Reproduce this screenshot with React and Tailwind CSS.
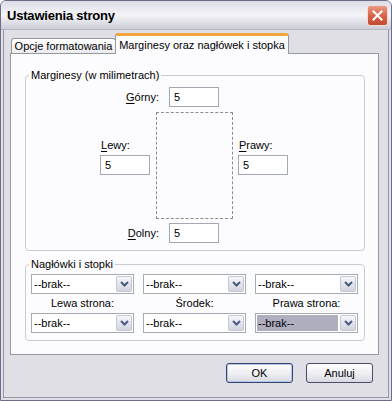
import React from 'react';

const Key = ({ k, rest }) => (
    <span>
        <u className="underline-offset-[2px]">{k}</u>
        {rest}
    </span>
);

const Field = ({ value }) => (
    <div className="w-[50px] h-[20px] border border-[#a3a9b4] bg-white flex items-center pl-[4px]">
        {value}
    </div>
);

const Combo = ({ selected }) => (
    <div className="h-[20px] border border-[#a5acb2] bg-white flex p-[1px]">
        <div className={`flex-1 flex items-center pl-[1px] ${selected ? 'bg-[#aeaebf]' : ''}`}>--brak--</div>
        <div className="w-[16px] ml-[2px] rounded-[2px] border border-[#c4c8d6] bg-gradient-to-b from-[#f6f7fb] to-[#d0d4e0] flex items-center justify-center">
            <svg width="9" height="6" viewBox="0 0 9 6">
                <path d="M1 1 L4.5 4.5 L8 1" stroke="#4a5a7c" strokeWidth="2" fill="none" />
            </svg>
        </div>
    </div>
);

const XpButton = ({ children, isDefault }) => (
    <button
        className={`w-[67px] h-[20px] rounded-[3px] border bg-gradient-to-b from-white via-[#f0f0f4] to-[#d8d8e2] flex items-center justify-center ${
            isDefault ? 'border-[#34446c] shadow-[inset_0_0_0_1px_#b4c8ee]' : 'border-[#4c4c6a]'
        }`}
    >
        {children}
    </button>
);

export default function App() {
    return (
        <div className="w-[392px] h-[401px] flex flex-col border border-[#6c6c86] rounded-t-[6px] bg-[#e0dfe5] text-[11px] leading-[13px] text-black font-['Liberation_Sans',Arial,sans-serif] overflow-hidden">
            {/* Title bar */}
            <div className="h-[29px] flex items-center justify-between pl-[6px] pr-[3px] bg-gradient-to-b from-[#dcdce6] via-[#f4f4f8] to-[#cdcdd8] border-b border-[#b6b6c6]">
                <span className="text-[13px] font-bold tracking-[-0.2px]">Ustawienia strony</span>
                <div className="w-[21px] h-[21px] rounded-[3px] border border-[#f4dcd6] bg-gradient-to-b from-[#e99a86] via-[#d8644a] to-[#c24a32] flex items-center justify-center">
                    <svg width="11" height="11" viewBox="0 0 11 11">
                        <path d="M1.5 1.5 L9.5 9.5 M9.5 1.5 L1.5 9.5" stroke="white" strokeWidth="2" strokeLinecap="square" />
                    </svg>
                </div>
            </div>

            {/* Body */}
            <div className="flex-1 mx-[2px] mb-[2px] border-x border-b border-[#9494aa] pl-[6px] pr-[9px] pt-[3px]">
                {/* Tabs */}
                <div className="flex items-end h-[20px] pl-[1px]">
                    <div className="w-[105px] h-[15px] border border-b-0 border-[#919b9c] rounded-t-[3px] bg-gradient-to-b from-white to-[#ecebf0] flex items-center justify-center">
                        Opcje formatowania
                    </div>
                    <div className="relative z-10 -ml-px w-[174px] h-[21px] -mb-px border border-b-0 border-[#919b9c] border-t-[3px] border-t-[#f0a43c] rounded-t-[3px] bg-[#fcfcfe] flex items-center justify-center">
                        Marginesy oraz nagłówek i stopka
                    </div>
                </div>

                {/* Panel */}
                <div className="h-[302px] border border-[#919b9c] bg-[#fcfcfe] pl-[14px] pr-[13px] pt-[15px] pb-[13px] flex flex-col">
                    <fieldset className="border border-[#cacad2] rounded-[4px] px-[5px] pb-[7px]">
                        <legend className="-ml-[2px] px-[2px]">Marginesy (w milimetrach)</legend>
                        <div className="flex items-center mt-[5px]">
                            <div className="w-[138px] text-right pr-[10px]">
                                <Key k="G" rest="órny:" />
                            </div>
                            <Field value="5" />
                        </div>
                        <div className="flex mt-[5px]">
                            <div className="ml-[69px] w-[50px] pt-[27px] flex flex-col">
                                <div className="pl-[1px] mb-[3px]">
                                    <Key k="L" rest="ewy:" />
                                </div>
                                <Field value="5" />
                            </div>
                            <div className="ml-[6px] w-[77px] h-[107px] border border-dashed border-[#8c8c8c]" />
                            <div className="ml-[5px] w-[50px] pt-[27px] flex flex-col">
                                <div className="pl-[1px] mb-[3px]">
                                    <Key k="P" rest="rawy:" />
                                </div>
                                <Field value="5" />
                            </div>
                        </div>
                        <div className="flex items-center mt-[4px]">
                            <div className="w-[138px] text-right pr-[10px]">
                                <Key k="D" rest="olny:" />
                            </div>
                            <Field value="5" />
                        </div>
                    </fieldset>

                    <fieldset className="mt-[7px] border border-[#cacad2] rounded-[4px] pl-[5px] pr-[6px] pb-[7px]">
                        <legend className="-ml-[2px] px-[2px]">Nagłówki i stopki</legend>
                        <div className="grid grid-cols-3 gap-x-[9px] mt-[3px]">
                            <Combo />
                            <Combo />
                            <Combo />
                            <div className="h-[19px] flex items-center justify-center">Lewa strona:</div>
                            <div className="h-[19px] flex items-center justify-center">Środek:</div>
                            <div className="h-[19px] flex items-center justify-center">Prawa strona:</div>
                            <Combo />
                            <Combo />
                            <Combo selected />
                        </div>
                    </fieldset>
                </div>

                {/* Buttons */}
                <div className="flex justify-end gap-[13px] pr-[6px] mt-[8px]">
                    <XpButton isDefault>OK</XpButton>
                    <XpButton>Anuluj</XpButton>
                </div>
            </div>
        </div>
    );
}
